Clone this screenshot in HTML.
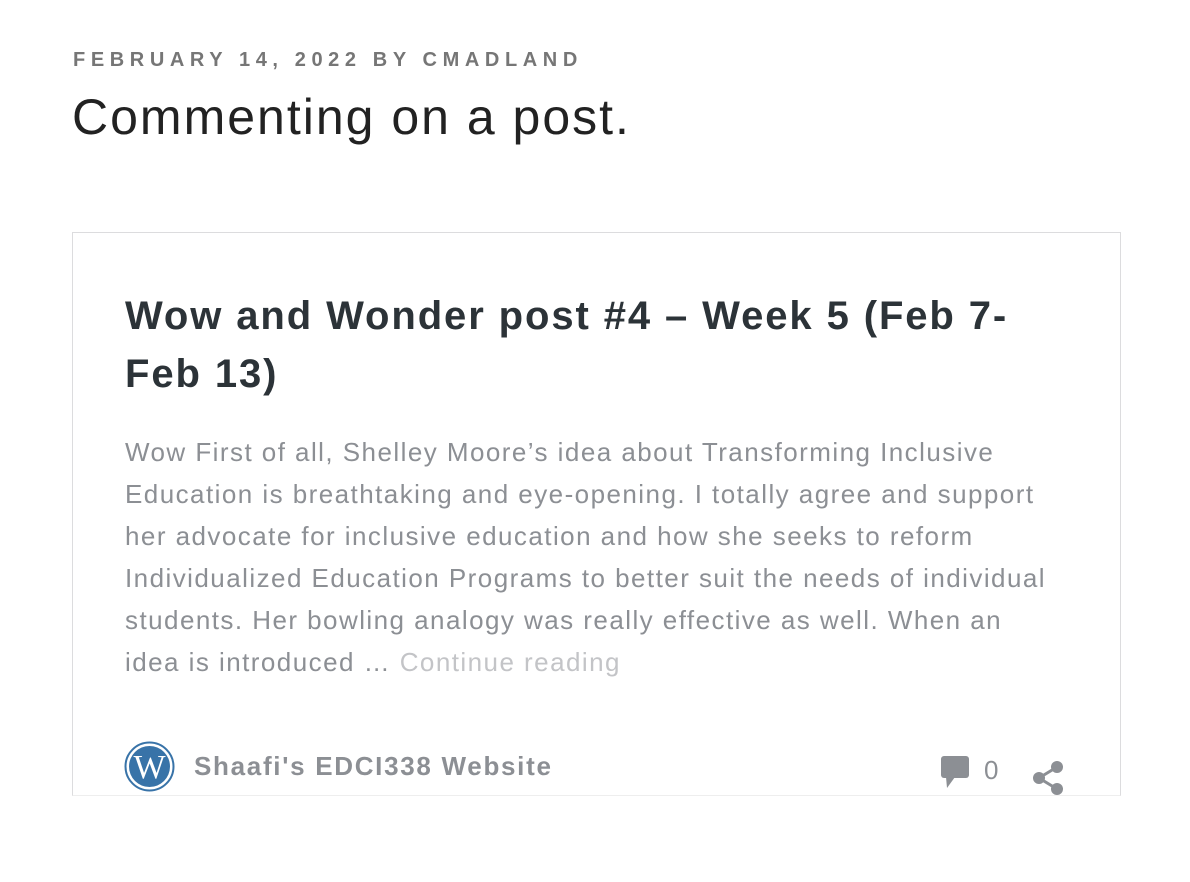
<!DOCTYPE html>
<html><head><meta charset="utf-8"><style>
body{margin:0;background:#fff;width:1190px;height:882px;overflow:hidden;font-family:"Liberation Sans",sans-serif;}
.meta{position:absolute;left:73px;top:49px;font-size:20px;font-weight:bold;letter-spacing:5.6px;color:#767676;}
h1{position:absolute;left:72px;top:88px;margin:0;font-size:50px;font-weight:normal;color:#222;letter-spacing:2px;}
.card{position:absolute;left:72px;top:232px;width:1047px;height:562px;border:1px solid #dcdcde;border-bottom-color:#eee;}
h2{position:absolute;left:52px;top:54px;margin:0;width:920px;font-size:40px;line-height:58px;font-weight:bold;color:#2c3338;letter-spacing:1.9px;}
p{position:absolute;left:52px;top:198px;margin:0;width:935px;font-size:26px;line-height:42px;color:#8c8f94;letter-spacing:1.45px;}
p span{color:#c3c4c7;}
.site{position:absolute;left:121px;top:518px;font-size:26px;font-weight:bold;color:#8c8f94;letter-spacing:1.7px;}
.num{position:absolute;left:911px;top:522px;font-size:26px;color:#8c8f94;}
</style></head><body>
<div class="meta">FEBRUARY 14, 2022 BY CMADLAND</div>
<h1>Commenting on a post.</h1>
<div class="card">
<h2>Wow and Wonder post #4 – Week 5 (Feb 7-Feb 13)</h2>
<p>Wow First of all, Shelley Moore’s idea about Transforming Inclusive Education is breathtaking and eye-opening. I totally agree and support her advocate for inclusive education and how she seeks to reform Individualized Education Programs to better suit the needs of individual students. Her bowling analogy was really effective as well. When an idea is introduced … <span>Continue reading</span></p>
<svg style="position:absolute;left:51px;top:508px" width="51" height="51" viewBox="0 0 51 51"><circle cx="25.5" cy="25.5" r="24" fill="#fff" stroke="#3873a8" stroke-width="2"/><circle cx="25.5" cy="25.5" r="20.5" fill="#3873a8"/><text x="25.5" y="37" text-anchor="middle" font-family="Liberation Serif" font-size="34" fill="#fff">W</text></svg>
<div class="site">Shaafi's EDCI338 Website</div>
<svg style="position:absolute;left:867px;top:522px" width="30" height="34" viewBox="0 0 30 34"><rect x="1" y="1" width="28" height="22" rx="3" fill="#8c8f94"/><path d="M6 22 L7 33 L15 22Z" fill="#8c8f94"/></svg>
<div class="num">0</div>
<svg style="position:absolute;left:958px;top:527px" width="36" height="36" viewBox="0 0 36 36"><g fill="#8c8f94"><circle cx="26" cy="7" r="6"/><circle cx="8" cy="18" r="6"/><circle cx="26" cy="29" r="6"/></g><path d="M26 7 L8 18 L26 29" stroke="#8c8f94" stroke-width="3" fill="none"/></svg>
</div>
</body></html>
